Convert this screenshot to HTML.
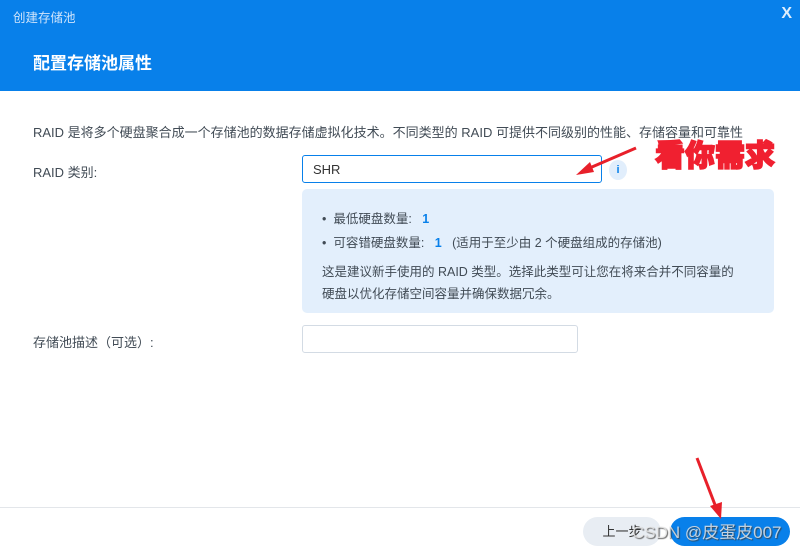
<!DOCTYPE html>
<html><head><meta charset="utf-8"><style>
*{margin:0;padding:0;box-sizing:border-box}
body{width:800px;height:548px;overflow:hidden;background:#fff;position:relative;font-family:"Liberation Sans","Noto Sans CJK SC",sans-serif;color:#414b55;font-size:13px}
.hdr{position:absolute;left:0;top:0;width:800px;height:91px;background:#0880ea}
.t1{position:absolute;left:13px;top:7px;font-size:12.5px;color:#cfe4fb}
.x{position:absolute;right:8px;top:5px;color:#e0eefc;font-size:16px;font-weight:bold}
.t2{position:absolute;left:33px;top:49px;font-size:17px;color:#fff;font-weight:bold}
.p{position:absolute;left:33px;font-size:13px}
.sel{position:absolute;left:302px;top:155px;width:300px;height:28px;border:1px solid #0880ea;border-radius:3px;padding:6px 10px;color:#333}
.info{position:absolute;left:609px;top:160px;width:18px;height:20px;border-radius:50%;background:#e1eefc;color:#0880ea;font-size:11px;font-weight:bold;text-align:center;line-height:20px}
.box{position:absolute;left:302px;top:189px;width:472px;height:124px;background:#e3effc;border-radius:5px}
.box div{position:absolute;left:20px;font-size:12.5px;color:#414b55;white-space:nowrap}
.b{color:#0880ea;font-weight:bold}
.inp{position:absolute;left:302px;top:325px;width:276px;height:28px;border:1px solid #d3dbe4;border-radius:3px}
.line{position:absolute;left:0;top:507px;width:800px;height:1px;background:#e3e6ea}
.btn1{position:absolute;left:583px;top:517px;width:78px;height:29px;border-radius:15px;background:#e8edf3;color:#333;text-align:center;line-height:29px}
.btn2{position:absolute;left:670px;top:517px;width:120px;height:29px;border-radius:15px;background:#0880ea}
.wm{position:absolute;left:632px;top:518px;font-size:17px;color:rgba(235,235,235,.8);text-shadow:1px 1px 1px rgba(60,60,60,.8)}
.ann{position:absolute;left:655px;top:131px;font-size:30px;font-weight:900;color:#f02030;-webkit-text-stroke:1.5px #f02030;text-shadow:0 0 2px #fff}
</style></head><body>
<div class="hdr"><div class="t1">创建存储池</div><div class="x">X</div><div class="t2">配置存储池属性</div></div>
<div class="p" style="top:122px">RAID 是将多个硬盘聚合成一个存储池的数据存储虚拟化技术。不同类型的 RAID 可提供不同级别的性能、存储容量和可靠性</div>
<div class="p" style="top:162px">RAID 类别:</div>
<div class="sel">SHR</div>
<div class="info">i</div>
<div class="box">
<div style="top:19px">• &nbsp;最低硬盘数量: &nbsp;&nbsp;<span class="b">1</span></div>
<div style="top:43px">• &nbsp;可容错硬盘数量: &nbsp;&nbsp;<span class="b">1</span> &nbsp;&nbsp;(适用于至少由 2 个硬盘组成的存储池)</div>
<div style="top:72px">这是建议新手使用的 RAID 类型。选择此类型可让您在将来合并不同容量的</div>
<div style="top:94px">硬盘以优化存储空间容量并确保数据冗余。</div>
</div>
<div class="p" style="top:332px">存储池描述（可选）:</div>
<div class="inp"></div>
<div class="line"></div>
<div class="btn1">上一步</div>
<div class="btn2"></div>
<div class="wm">CSDN @皮蛋皮007</div>
<div class="ann">看你需求</div>
<svg style="position:absolute;left:0;top:0" width="800" height="548">
<line x1="636" y1="148" x2="585" y2="170" stroke="#e8202a" stroke-width="3"/>
<polygon points="576,175 590,162 594,172" fill="#e8202a"/>
<line x1="697" y1="458" x2="717" y2="510" stroke="#e8202a" stroke-width="3"/>
<polygon points="721,519 710,506 722,502" fill="#e8202a"/>
</svg>
</body></html>
